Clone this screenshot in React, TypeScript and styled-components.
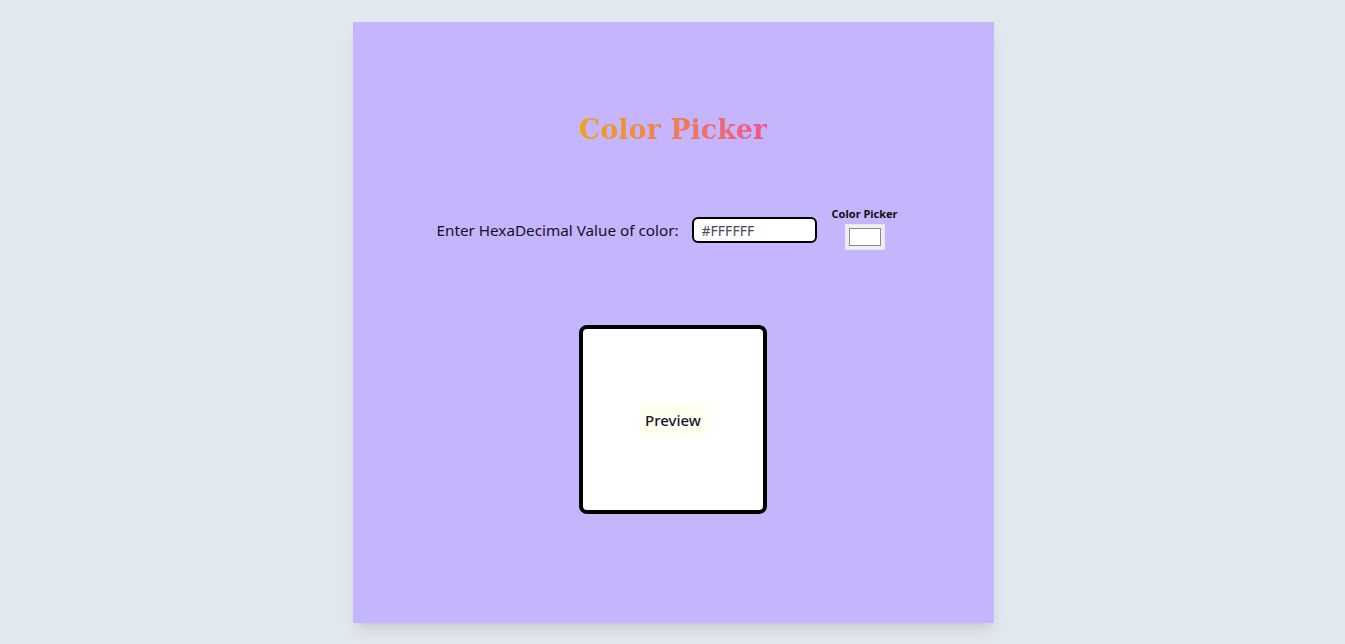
import React, { useState } from "react";
import styled, { createGlobalStyle } from "styled-components";

const Global = createGlobalStyle`
  html, body { margin: 0; padding: 0; }
  body {
    background: #e2e8f0;
    font-family: "Noto Sans", "Open Sans", sans-serif;
  }
`;

const Page = styled.div`
  display: flex;
  justify-content: center;
  padding-top: 22px;
  padding-left: 1px;
  min-height: 644px;
  box-sizing: border-box;
`;

const Card = styled.main`
  width: 641px;
  height: 601px;
  background: #c4b5fd;
  box-shadow: 0 10px 15px -3px rgba(0, 0, 0, 0.1), 0 4px 6px -4px rgba(0, 0, 0, 0.1);
  display: flex;
  flex-direction: column;
  align-items: center;
  box-sizing: border-box;
  padding-top: 86px;
`;

const Title = styled.h1`
  margin: 0;
  font-family: Georgia, "DejaVu Serif", "Liberation Serif", serif;
  font-weight: 700;
  font-size: 27px;
  line-height: 44px;
  background: linear-gradient(to right, #eca51a 0%, #f07a5a 55%, #f0558e 100%);
  -webkit-background-clip: text;
  background-clip: text;
  color: transparent;
`;

const Row = styled.div`
  margin-top: 58px;
  margin-right: 12px;
  display: flex;
  align-items: center;
  gap: 12px;
`;

const Label = styled.label`
  font-size: 15.25px;
  color: #14102a;
  margin-right: 1px;
`;

const HexInput = styled.input`
  width: 125px;
  height: 26px;
  box-sizing: border-box;
  border: 2px solid #000;
  border-radius: 6px;
  padding: 0 8px;
  font-family: "Noto Sans", sans-serif;
  font-size: 14px;
  color: #4a4658;
  background: #fff;
  outline: none;
`;

const PickerGroup = styled.div`
  display: flex;
  flex-direction: column;
  align-items: center;
  gap: 3px;
  margin-left: 3px;
  margin-top: -4px;
`;

const PickerLabel = styled.span`
  font-size: 11px;
  font-weight: 700;
  color: #111;
`;

const ColorInput = styled.input`
  width: 40px;
  height: 26px;
  padding: 3px;
  box-sizing: border-box;
  border: 1px solid #e6e6e6;
  background: #efefef;
  cursor: pointer;
  &::-webkit-color-swatch-wrapper { padding: 0; }
  &::-webkit-color-swatch { border: 1px solid #8a8a8a; }
`;

const Preview = styled.div<{ $color: string }>`
  margin-top: 75px;
  width: 188px;
  height: 189px;
  box-sizing: border-box;
  border: 4px solid #000;
  border-radius: 8px;
  background: ${(p) => p.$color};
  display: flex;
  align-items: center;
  justify-content: center;
`;

const PreviewText = styled.span`
  background: #fffff0;
  font-size: 15px;
  font-weight: 500;
  color: #1c1530;
  padding: 6px 5px;
`;

export default function App() {
  const [color, setColor] = useState("#FFFFFF");
  return (
    <>
      <Global />
      <Page>
        <Card>
          <Title>Color Picker</Title>
          <Row>
            <Label htmlFor="hex">Enter HexaDecimal Value of color:</Label>
            <HexInput id="hex" value={color} onChange={(e) => setColor(e.target.value)} />
            <PickerGroup>
              <PickerLabel>Color Picker</PickerLabel>
              <ColorInput
                type="color"
                value={color.length === 7 ? color.toLowerCase() : "#ffffff"}
                onChange={(e) => setColor(e.target.value.toUpperCase())}
              />
            </PickerGroup>
          </Row>
          <Preview $color={color}>
            <PreviewText>Preview</PreviewText>
          </Preview>
        </Card>
      </Page>
    </>
  );
}
